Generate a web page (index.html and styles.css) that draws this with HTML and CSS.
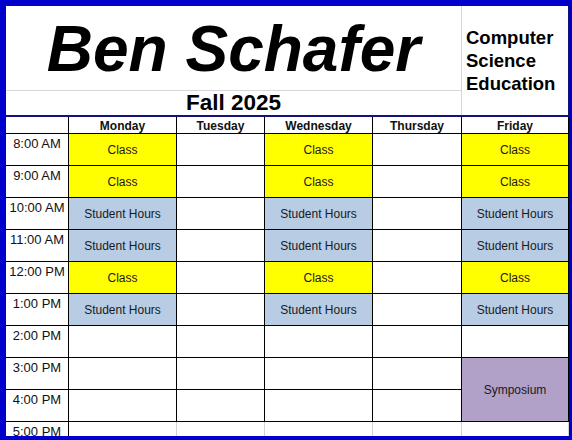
FILE: index.html
```html
<!DOCTYPE html>
<html>
<head>
<meta charset="utf-8">
<link rel="stylesheet" href="styles.css">
</head>
<body>
<div class="sheet">
  <div class="head">
    <div class="title">Ben Schafer</div>
    <div class="dept">Computer<br>Science<br>Education</div>
    <div class="term">Fall 2025</div>
  </div>
  <div class="grid">
    <div class="h t"></div><div class="h">Monday</div><div class="h">Tuesday</div><div class="h">Wednesday</div><div class="h">Thursday</div><div class="h">Friday</div>

    <div class="t">8:00 AM</div><div class="c y">Class</div><div class="c"></div><div class="c y">Class</div><div class="c"></div><div class="c y">Class</div>
    <div class="t">9:00 AM</div><div class="c y">Class</div><div class="c"></div><div class="c y">Class</div><div class="c"></div><div class="c y">Class</div>
    <div class="t">10:00 AM</div><div class="c b">Student Hours</div><div class="c"></div><div class="c b">Student Hours</div><div class="c"></div><div class="c b">Student Hours</div>
    <div class="t">11:00 AM</div><div class="c b">Student Hours</div><div class="c"></div><div class="c b">Student Hours</div><div class="c"></div><div class="c b">Student Hours</div>
    <div class="t">12:00 PM</div><div class="c y">Class</div><div class="c"></div><div class="c y">Class</div><div class="c"></div><div class="c y">Class</div>
    <div class="t">1:00 PM</div><div class="c b">Student Hours</div><div class="c"></div><div class="c b">Student Hours</div><div class="c"></div><div class="c b">Student Hours</div>
    <div class="t">2:00 PM</div><div class="c"></div><div class="c"></div><div class="c"></div><div class="c"></div><div class="c"></div>
    <div class="t">3:00 PM</div><div class="c"></div><div class="c"></div><div class="c"></div><div class="c"></div><div class="c p span2">Symposium</div>
    <div class="t">4:00 PM</div><div class="c"></div><div class="c"></div><div class="c"></div><div class="c"></div>
    <div class="t last">5:00 PM</div><div class="c last"></div><div class="c last"></div><div class="c last"></div><div class="c last"></div><div class="c last"></div>
  </div>
</div>
</body>
</html>
```

FILE: styles.css
```css
html, body {
  margin: 0;
  padding: 0;
}
body {
  width: 572px;
  height: 440px;
  overflow: hidden;
  background: #0000cc;
  font-family: "Liberation Sans", Arial, sans-serif;
  color: #000;
}
.sheet {
  margin: 6px 3px 0 6px;
  width: 563px;
  background: #fff;
}
.head {
  display: grid;
  grid-template-columns: 456px 107px;
  grid-template-rows: 85px 24px;
  border-bottom: 2px solid #12127a;
  box-sizing: border-box;
  height: 111px;
}
.title {
  grid-column: 1;
  grid-row: 1;
  border-right: 1px solid #d6d6d6;
  border-bottom: 1px solid #d6d6d6;
  text-align: center;
  font-weight: bold;
  font-style: italic;
  font-size: 64px;
  line-height: 64px;
  padding-top: 11px;
  box-sizing: border-box;
}
.term {
  grid-column: 1;
  grid-row: 2;
  border-right: 1px solid #d6d6d6;
  text-align: center;
  font-weight: bold;
  font-size: 22.5px;
  line-height: 24px;
}
.dept {
  grid-column: 2;
  grid-row: 1 / span 2;
  font-weight: bold;
  font-size: 18.5px;
  line-height: 23px;
  padding: 20px 0 0 4px;
  box-sizing: border-box;
  border-right: 1px solid #12127a;
}
.grid {
  display: grid;
  grid-template-columns: 63px 108px 88px 108px 89px 107px;
  grid-template-rows: 17px repeat(9, 32px) 14px;
}
.grid > div {
  box-sizing: border-box;
  border-right: 1px solid #000;
  border-bottom: 1px solid #000;
}
.h {
  font-weight: bold;
  font-size: 12px;
  display: flex;
  align-items: center;
  justify-content: center;
  color: #111;
  padding-top: 1px;
}
.t {
  font-size: 13px;
  line-height: 15px;
  text-align: center;
  padding-top: 2px;
  color: #111;
}
.c {
  font-size: 12px;
  display: flex;
  align-items: center;
  justify-content: center;
  color: #1a1a1a;
}
.y { background: #ffff00; }
.b { background: #b8cce4; }
.p { background: #b1a0c7; }
.span2 { grid-row: span 2; }
.grid > .last {
  border-bottom: none;
}
.grid > .c.last {
  border-right-color: #d4d4d4;
}
```
